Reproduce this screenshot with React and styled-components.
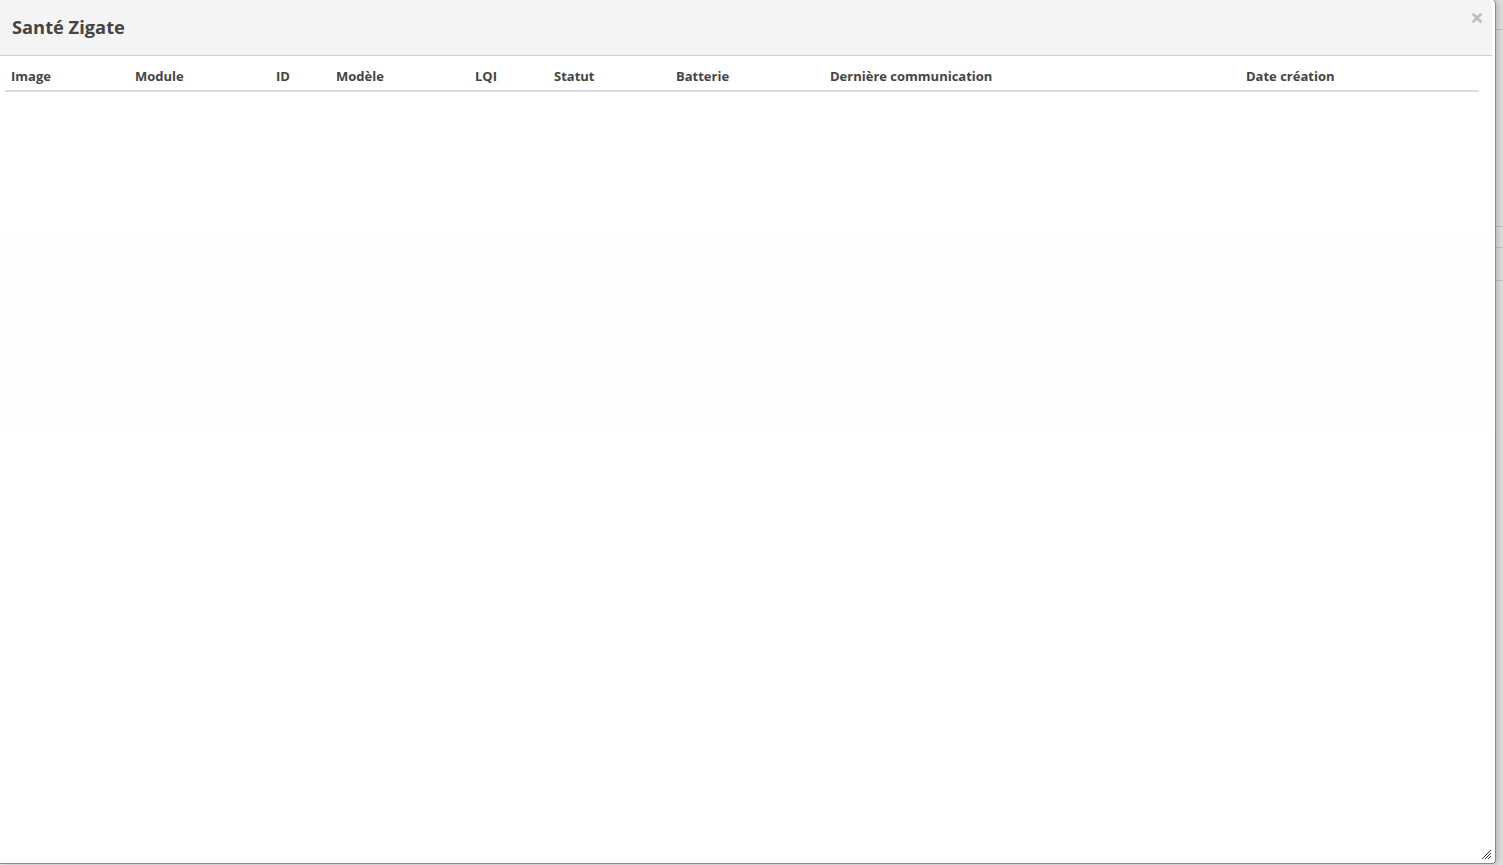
import React from "react";
import styled, { createGlobalStyle } from "styled-components";

const GlobalStyle = createGlobalStyle`
  html, body { margin: 0; padding: 0; height: 100%; }
  body {
    background: #e2e2e2;
    font-family: "Open Sans", "Noto Sans", "Liberation Sans", sans-serif;
    overflow: hidden;
  }
  #root { height: 100%; }
`;

const Page = styled.div`
  position: relative;
  width: 100%;
  height: 100%;
  display: flex;
  flex-direction: column;
`;

const BgRow = styled.div`
  height: ${(p) => p.$h}px;
  border-bottom: 1px solid #c6c6c6;
  flex-shrink: 0;
`;

const Dialog = styled.div`
  position: absolute;
  left: 0;
  top: 0;
  width: 1492px;
  height: 863px;
  box-sizing: content-box;
  padding-right: 3px;
  background: #fff;
  border-right: 1px solid #8a8a8a;
  border-bottom: 1px solid #8a8a8a;
  border-radius: 0 4px 4px 0;
  box-shadow: 3px 0 6px rgba(0, 0, 0, 0.18);
  display: flex;
  flex-direction: column;
`;

const Header = styled.div`
  position: relative;
  height: 55px;
  flex-shrink: 0;
  background: #f4f4f4;
  border-bottom: 1px solid #cfcfcf;
  border-top-right-radius: 4px;
  display: flex;
  align-items: center;
  padding-left: 12px;
`;

const Title = styled.span`
  font-size: 18.3px;
  font-weight: 700;
  color: #444;
  padding-bottom: 2px;
`;

const Close = styled.button`
  position: absolute;
  top: 12px;
  right: 9px;
  width: 12px;
  height: 12px;
  padding: 0;
  border: 0;
  background: transparent;
  display: flex;
  align-items: center;
  justify-content: center;
  cursor: pointer;
`;

const Body = styled.div`
  flex: 1;
  padding: 0 13px 0 5px;
  background: linear-gradient(
    to bottom,
    #fff 0,
    #fff 175px,
    #fefefe 175px,
    #fefefe 375px,
    #fff 375px
  );
  position: relative;
`;

const HeadRow = styled.div`
  display: grid;
  grid-template-columns: 124px 141px 60px 139px 79px 122px 154px 416px 239px;
  height: 34px;
  border-bottom: 2px solid #dddddd;
  align-items: center;
`;

const Th = styled.div`
  padding-left: 6px;
  font-size: 13px;
  font-weight: 700;
  color: #444;
  white-space: nowrap;
  padding-top: 6px;
`;

const Grip = styled.div`
  position: absolute;
  right: 4px;
  bottom: 4px;
  width: 9px;
  height: 9px;
  display: flex;
`;

const columns = [
  "Image",
  "Module",
  "ID",
  "Modèle",
  "LQI",
  "Statut",
  "Batterie",
  "Dernière communication",
  "Date création",
];

export default function App() {
  return (
    <>
      <GlobalStyle />
      <Page>
        <BgRow $h={29} />
        <BgRow $h={196} />
        <BgRow $h={20} />
        <BgRow $h={32} />
        <Dialog>
          <Header>
            <Title>Santé Zigate</Title>
            <Close aria-label="Fermer">
              <svg width="10" height="10" viewBox="0 0 10 10">
                <path
                  d="M1.5 1.5 L8.5 8.5 M8.5 1.5 L1.5 8.5"
                  stroke="#bdbdbd"
                  strokeWidth="2.6"
                  strokeLinecap="square"
                />
              </svg>
            </Close>
          </Header>
          <Body>
            <HeadRow>
              {columns.map((c) => (
                <Th key={c}>{c}</Th>
              ))}
            </HeadRow>
          </Body>
          <Grip>
            <svg width="9" height="9" viewBox="0 0 9 9" shapeRendering="crispEdges">
              <g fill="#333">
                <rect x="8" y="0" width="1" height="1" />
                <rect x="7" y="1" width="1" height="1" />
                <rect x="6" y="2" width="1" height="1" />
                <rect x="5" y="3" width="1" height="1" />
                <rect x="4" y="4" width="1" height="1" />
                <rect x="3" y="5" width="1" height="1" />
                <rect x="2" y="6" width="1" height="1" />
                <rect x="1" y="7" width="1" height="1" />
                <rect x="0" y="8" width="1" height="1" />
                <rect x="8" y="3" width="1" height="1" />
                <rect x="7" y="4" width="1" height="1" />
                <rect x="6" y="5" width="1" height="1" />
                <rect x="5" y="6" width="1" height="1" />
                <rect x="4" y="7" width="1" height="1" />
                <rect x="3" y="8" width="1" height="1" />
                <rect x="8" y="6" width="1" height="1" />
                <rect x="7" y="7" width="1" height="1" />
                <rect x="6" y="8" width="1" height="1" />
              </g>
            </svg>
          </Grip>
        </Dialog>
      </Page>
    </>
  );
}
